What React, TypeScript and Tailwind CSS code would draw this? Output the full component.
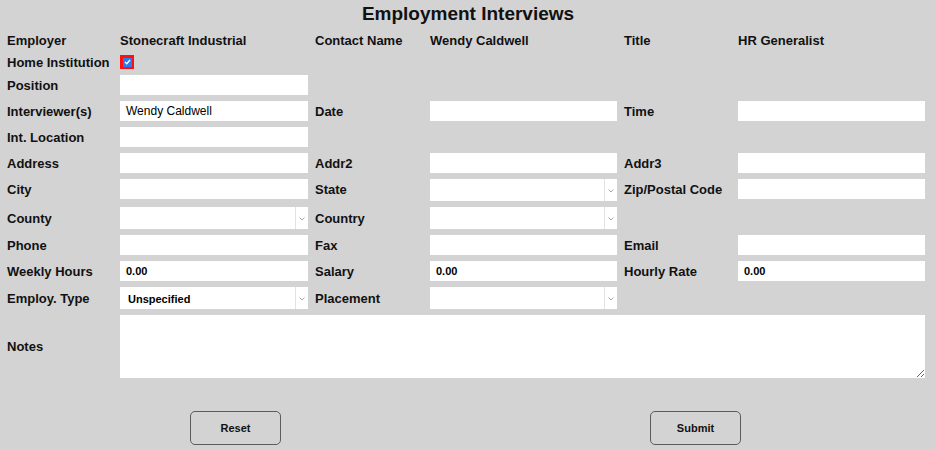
import type { ReactNode } from "react";

const LABEL = "font-['Liberation_Sans',Arial,sans-serif] text-[13px] font-bold text-[#111] leading-none";
const FIELD = "font-['Liberation_Sans',Tahoma,sans-serif] text-[11px] text-black";

function Label({ children, className = "" }: { children?: ReactNode; className?: string }) {
  return <div className={`${LABEL} flex items-center ${className}`}>{children}</div>;
}

function TextBox({ value = "", h = "h-5", w = "w-[188px]", bold = true }: { value?: string; h?: string; w?: string; bold?: boolean }) {
  return (
    <div className={`${FIELD} ${h} ${w} ${bold ? "font-bold" : "text-[12px]"} bg-white flex items-center pl-[6px]`}>
      {value}
    </div>
  );
}

function Select({ value = "", w = "w-[188px]", className = "" }: { value?: string; w?: string; className?: string }) {
  return (
    <div className={`${FIELD} ${w} h-[22px] bg-white flex font-bold ${className}`}>
      <div className="flex-1 flex items-center pl-2 pt-[2px] border-r border-[#e2e2e2]">{value}</div>
      <div className="w-[12px] flex items-center justify-center">
        <svg width="6" height="4" viewBox="0 0 6 4" className="mt-[2px]">
          <path d="M0.5 0.5 L3 3 L5.5 0.5" fill="none" stroke="#a8a8a8" strokeWidth="1" />
        </svg>
      </div>
    </div>
  );
}

// one line of the form: three label/field pairs laid on the same column grid
function Row({ cells, className = "" }: { cells: [ReactNode, ReactNode][]; className?: string }) {
  const labelWidths = ["w-[113px]", "w-[122px] pl-[7px]", "w-[121px] pl-[7px]"];
  const fieldWidths = ["w-[188px]", "w-[187px]", "w-[187px]"];
  return (
    <div className={`flex items-stretch ${className}`}>
      {cells.map(([label, field], i) => (
        <div key={i} className="flex items-stretch">
          <Label className={labelWidths[i]}>{label}</Label>
          <div className={`${fieldWidths[i]} flex items-center`}>{field}</div>
        </div>
      ))}
    </div>
  );
}

export default function App() {
  return (
    <div className="w-[936px] h-[449px] bg-[#d3d3d3] pl-[7px] overflow-hidden">
      <h1 className="h-8 pr-[7px] text-center font-['Liberation_Sans',Arial,sans-serif] text-[19px] font-bold leading-[28px] text-[#111]">
        Employment Interviews
      </h1>

      <Row
        className="h-4"
        cells={[
          ["Employer", <span className={LABEL}>Stonecraft Industrial</span>],
          ["Contact Name", <span className={LABEL}>Wendy Caldwell</span>],
          ["Title", <span className={LABEL}>HR Generalist</span>],
        ]}
      />

      <Row
        className="h-4 mt-[6px]"
        cells={[
          [
            "Home Institution",
            <div className="w-[14px] h-[14px] bg-[#ff1010] flex items-center justify-center">
              <div className="w-[9px] h-[9px] bg-[#2a7af0] flex items-center justify-center">
                <svg width="7" height="6" viewBox="0 0 7 6">
                  <path d="M1 3 L2.8 4.8 L6 1" fill="none" stroke="white" strokeWidth="1.4" />
                </svg>
              </div>
            </div>,
          ],
        ]}
      />

      <Row className="h-5 mt-[5px]" cells={[["Position", <TextBox />]]} />

      <Row
        className="h-5 mt-[6px]"
        cells={[
          ["Interviewer(s)", <TextBox value="Wendy Caldwell" bold={false} />],
          ["Date", <TextBox w="w-[187px]" />],
          ["Time", <TextBox w="w-[187px]" />],
        ]}
      />

      <Row className="h-5 mt-[6px]" cells={[["Int. Location", <TextBox />]]} />

      <Row
        className="h-5 mt-[6px]"
        cells={[
          ["Address", <TextBox />],
          ["Addr2", <TextBox w="w-[187px]" />],
          ["Addr3", <TextBox w="w-[187px]" />],
        ]}
      />

      <Row
        className="h-5 mt-[6px]"
        cells={[
          ["City", <TextBox />],
          ["State", <Select w="w-[187px]" className="mt-[2px]" />],
          ["Zip/Postal Code", <TextBox w="w-[187px]" />],
        ]}
      />

      <Row
        className="h-[22px] mt-[8px]"
        cells={[
          ["County", <Select />],
          ["Country", <Select w="w-[187px]" />],
        ]}
      />

      <Row
        className="h-5 mt-[6px]"
        cells={[
          ["Phone", <TextBox />],
          ["Fax", <TextBox w="w-[187px]" />],
          ["Email", <TextBox w="w-[187px]" />],
        ]}
      />

      <Row
        className="h-5 mt-[6px]"
        cells={[
          ["Weekly Hours", <TextBox value="0.00" />],
          ["Salary", <TextBox value="0.00" w="w-[187px]" />],
          ["Hourly Rate", <TextBox value="0.00" w="w-[187px]" />],
        ]}
      />

      <Row
        className="h-[22px] mt-[6px]"
        cells={[
          ["Employ. Type", <Select value="Unspecified" />],
          ["Placement", <Select w="w-[187px]" />],
        ]}
      />

      <div className="flex mt-[6px] h-[63px]">
        <Label className="w-[113px]">Notes</Label>
        <textarea className="w-[805px] h-[63px] bg-white outline-none border-0 p-1 text-[11px]" />
      </div>

      <div className="flex mt-[33px] pl-[183px] gap-[369px]">
        <button className="w-[91px] h-[34px] rounded-[5px] border border-[#5c5c5c] font-['Liberation_Sans',Tahoma,sans-serif] text-[11px] font-bold text-[#111]">
          Reset
        </button>
        <button className="w-[91px] h-[34px] rounded-[5px] border border-[#5c5c5c] font-['Liberation_Sans',Tahoma,sans-serif] text-[11px] font-bold text-[#111]">
          Submit
        </button>
      </div>
    </div>
  );
}
